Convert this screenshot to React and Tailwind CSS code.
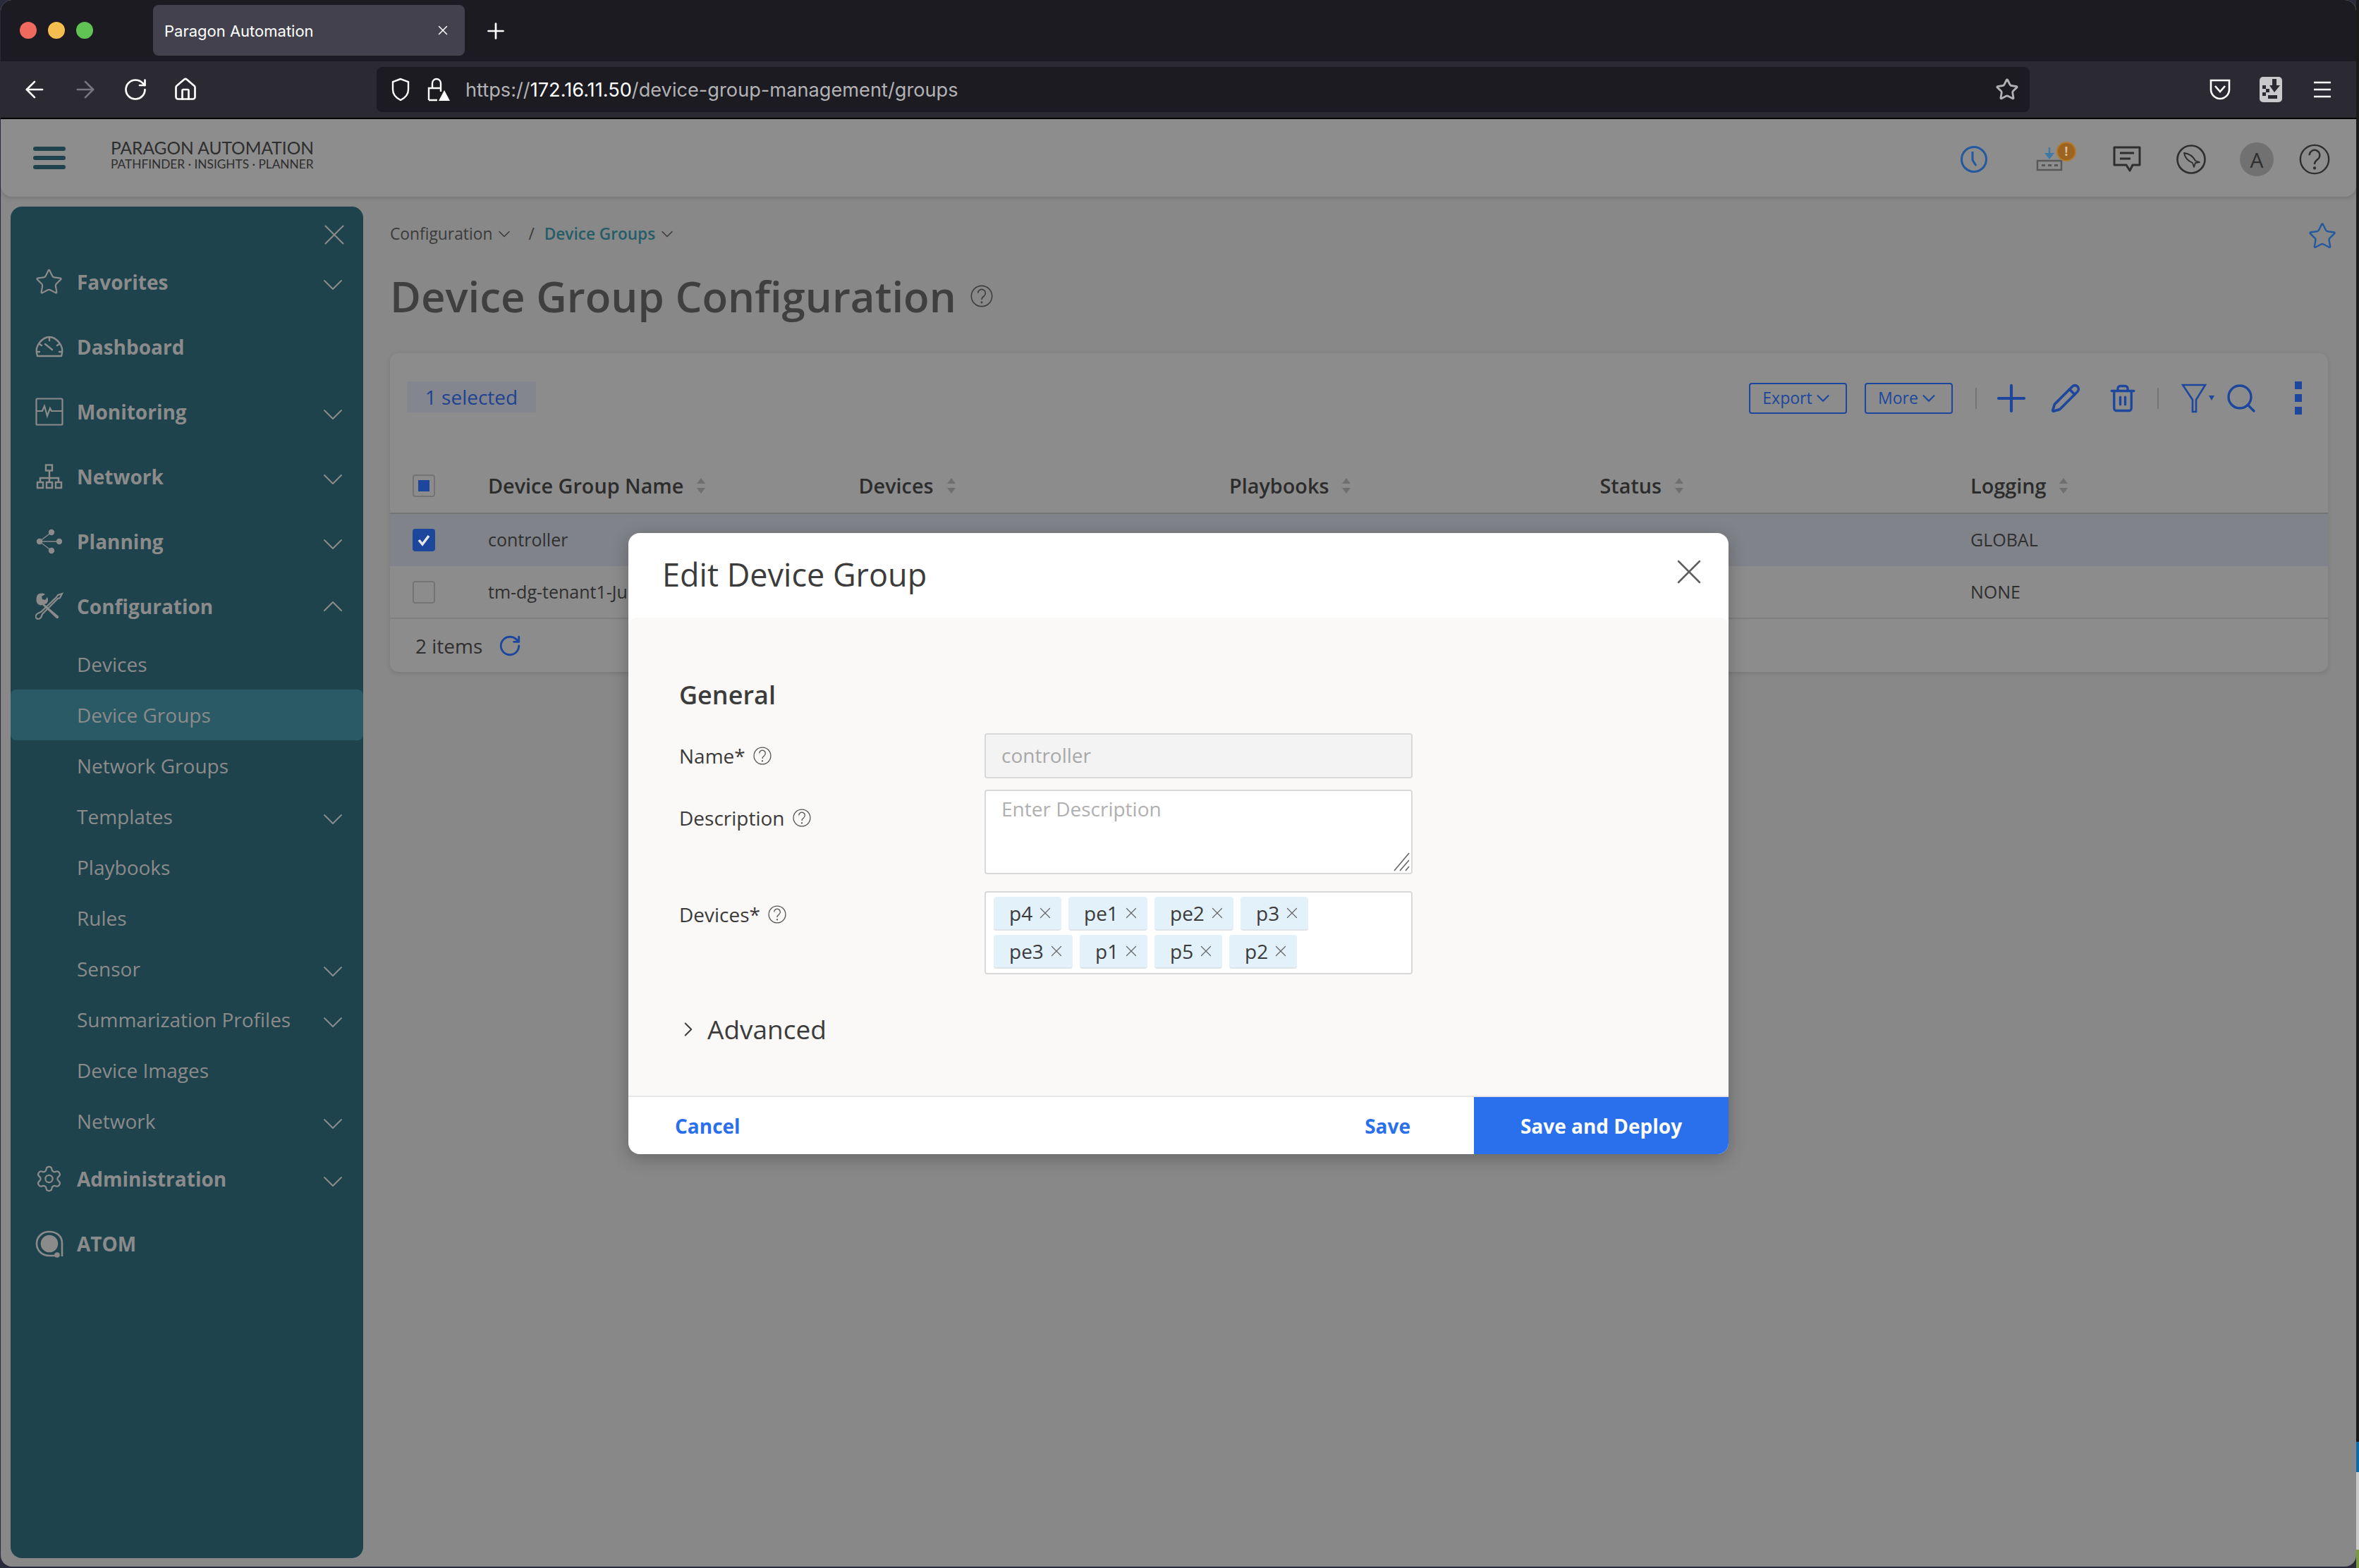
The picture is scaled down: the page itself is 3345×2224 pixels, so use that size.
import {
  ArrowLeft,
  ArrowRight,
  ChevronDown,
  ChevronRight,
  ChevronUp,
  Home,
  Pencil,
  Plus,
  RotateCw,
  Search,
  Settings,
  Star,
  Trash2,
  X,
} from "lucide-react";

const sans = "font-['Open_Sans',sans-serif]";

const HelpIcon = ({ size, stroke, className }) => (
  <svg className={className} width={size} height={size} viewBox="0 0 24 24" fill="none" stroke="currentColor" strokeWidth={stroke}>
    <circle cx="12" cy="12" r="11" />
    <path d="M8 8.8a4 4 0 1 1 6.4 3.2c-1.5 1.1-2.4 1.9-2.4 3.8" />
    <circle cx="12" cy="18.8" r="0.5" />
  </svg>
);

const GaugeIcon = () => (
  <svg width="40" height="32" viewBox="0 0 40 32" fill="none" stroke="currentColor" strokeWidth="2.4">
    <path d="M3 29c-3-10 0-15 3-19C10 5 15 2 20 2s10 3 14 8c3 4 6 9 3 19 z" strokeLinejoin="round" />
    <path d="M20 3v4M6 12l3 2M34 12l-3 2M2 23h4M38 23h-4M14 12l10 8" strokeLinecap="round" />
  </svg>
);

const MonitorIcon = () => (
  <svg width="40" height="40" viewBox="0 0 40 40" fill="none" stroke="currentColor" strokeWidth="2.2">
    <rect x="1.5" y="1.5" width="37" height="37" rx="1.5" />
    <path d="M1.5 19H10l3-7 4 14 4-11 2 4h15.5" />
  </svg>
);

const NetworkIcon = () => (
  <svg width="38" height="36" viewBox="0 0 38 36" fill="none" stroke="currentColor" strokeWidth="2.4">
    <rect x="14" y="1.5" width="9" height="8" />
    <rect x="2" y="26" width="8" height="8" />
    <rect x="15" y="26" width="8" height="8" />
    <rect x="28" y="26" width="8" height="8" />
    <path d="M19 10v15M6 25v-5h26v5" />
  </svg>
);

const PlanningIcon = () => (
  <svg width="38" height="36" viewBox="0 0 38 36" fill="currentColor" stroke="currentColor" strokeWidth="1.4">
    <circle cx="5" cy="18" r="3.5" />
    <circle cx="22" cy="5" r="3.5" />
    <circle cx="33" cy="18" r="3.5" />
    <circle cx="22" cy="31" r="3.5" />
    <path d="M5 18 22 5M5 18h28M5 18l17 13" fill="none" />
  </svg>
);

const ToolsIcon = () => (
  <svg width="40" height="40" viewBox="0 0 40 40" fill="currentColor">
    <path d="M3 4c3-3 8-3 11-1l-5 3 1 4 4 1 3-4c2 3 1 7-1 9l-3 1 20 17c1 2-1 4-3 3L10 18c-3 1-5 0-7-2-2-3-2-8 0-12z" />
    <path d="m38 2-3 6-3 1-22 22c-1 4-3 7-6 7-3 0-4-3-3-5 1-3 4-4 7-5L30 7l2-3z" fill="none" stroke="currentColor" strokeWidth="2.2" />
  </svg>
);

const AtomIcon = () => (
  <svg width="40" height="40" viewBox="0 0 40 40" fill="none" stroke="currentColor" strokeWidth="2.6">
    <path d="M38 38V19C38 9 30 3 20 3S2 10 2 20s8 17 18 17h10" />
    <circle cx="20" cy="20" r="11" fill="currentColor" />
    <circle cx="31" cy="36" r="2.5" fill="currentColor" />
  </svg>
);

const NavRow = ({ icon, label, open }) => (
  <div className="flex h-[92px] items-center pl-[34px] pr-[19px]">
    <span className="flex w-[41px] justify-center text-[#8b8b8b]">{icon}</span>
    <span className="ml-[19px] flex-1 text-[28px] font-bold text-[#8b8b8b]">{label}</span>
    {open === true && <ChevronUp className="text-[#8b8b8b]" size={48} strokeWidth={1} />}
    {open === false && <ChevronDown className="mt-[8px] text-[#8b8b8b]" size={48} strokeWidth={1} />}
  </div>
);

const SubRow = ({ label, active, more }) => (
  <div
    className={`flex h-[72px] items-center pl-[94px] pr-[19px] ${active ? "rounded-lg bg-[#2a5a66]" : ""}`}
  >
    <span className="flex-1 text-[28px] text-[#8b8b8b]">{label}</span>
    {more && <ChevronDown className="mt-[8px] text-[#8b8b8b]" size={48} strokeWidth={1} />}
  </div>
);

const Sidebar = () => (
  <aside className="ml-[14px] mt-[14px] h-[1917px] w-[500px] shrink-0 rounded-2xl bg-[#1e434d]">
    <div className="flex h-[61px] items-start justify-end pr-[16px] pt-[15px]">
      <X className="text-[#8b8b8b]" size={50} strokeWidth={1} />
    </div>
    <NavRow icon={<Star size={50} strokeWidth={1.3} />} label="Favorites" open={false} />
    <NavRow icon={<GaugeIcon />} label="Dashboard" />
    <NavRow icon={<MonitorIcon />} label="Monitoring" open={false} />
    <NavRow icon={<NetworkIcon />} label="Network" open={false} />
    <NavRow icon={<PlanningIcon />} label="Planning" open={false} />
    <NavRow icon={<ToolsIcon />} label="Configuration" open={true} />
    <SubRow label="Devices" />
    <SubRow label="Device Groups" active />
    <SubRow label="Network Groups" />
    <SubRow label="Templates" more />
    <SubRow label="Playbooks" />
    <SubRow label="Rules" />
    <SubRow label="Sensor" more />
    <SubRow label="Summarization Profiles" more />
    <SubRow label="Device Images" />
    <SubRow label="Network" more />
    <NavRow icon={<Settings size={48} strokeWidth={1.3} />} label="Administration" open={false} />
    <NavRow icon={<AtomIcon />} label="ATOM" />
  </aside>
);

const SortCaret = () => (
  <svg width="14" height="22" viewBox="0 0 14 22" fill="#6f6f6f" className="ml-[18px]">
    <path d="M7 0l6 8H1zM7 22l6-8H1z" />
  </svg>
);

const HeadCell = ({ label }) => (
  <div className="flex w-[525.5px] shrink-0 items-center text-[28.8px] font-semibold text-[#2c2c2c]">
    {label}
    <SortCaret />
  </div>
);

const BodyCell = ({ children }) => (
  <div className="w-[525.5px] shrink-0 text-[25px] text-[#2f2f2f]">{children}</div>
);

const Checkbox = ({ state }) => {
  if (state === "checked") {
    return (
      <span className="flex h-[32px] w-[32px] items-center justify-center rounded bg-[#1c479d]">
        <svg width="22" height="22" viewBox="0 0 22 22" fill="none" stroke="#e8e8e8" strokeWidth="3.5">
          <path d="m4 11 5 6 9-12" />
        </svg>
      </span>
    );
  }
  return (
    <span className="flex h-[32px] w-[32px] items-center justify-center rounded border-2 border-[#747474]">
      {state === "mixed" && <span className="h-[16px] w-[16px] bg-[#1c479d]" />}
    </span>
  );
};

const OutlineButton = ({ label, width }) => (
  <button
    className={`flex h-[44px] items-center justify-center rounded border-2 border-[#1c479d] text-[23px] text-[#1c479d] ${width}`}
  >
    {label}
    <ChevronDown size={30} strokeWidth={1.7} />
  </button>
);

const ToolbarGap = () => <span className="h-[30px] w-[2px] bg-[#757575]" />;

const DeviceTable = () => (
  <div className="mt-[39px] h-[452px] w-[2748px] overflow-hidden rounded-xl bg-[#8c8c8c] shadow-[0_2px_6px_rgba(0,0,0,0.12)]">
    <div className="flex items-start justify-between pl-[24px] pt-[40px]">
      <div className="flex h-[44px] w-[183px] items-center justify-center bg-[#83868e] text-[28px] text-[#21428f]">
        1 selected
      </div>
      <div className="flex h-[47px] items-center text-[#1c479d]">
        <OutlineButton label="Export" width="w-[139px]" />
        <span className="w-[25px]" />
        <OutlineButton label="More" width="w-[125px]" />
        <span className="w-[32px]" />
        <ToolbarGap />
        <Plus className="ml-[18px]" size={62} strokeWidth={1.6} />
        <Pencil className="ml-[24px]" size={44} strokeWidth={2} />
        <Trash2 className="ml-[38px]" size={42} strokeWidth={1.9} />
        <span className="w-[28px]" />
        <ToolbarGap />
        <svg className="ml-[32px]" width="48" height="44" viewBox="0 0 48 44" fill="none" stroke="currentColor" strokeWidth="2.6">
          <path d="M2 3h32L21 24v17h-5V24z" />
          <path d="M39 18h8l-4 7z" fill="currentColor" stroke="none" />
        </svg>
        <Search className="ml-[13px]" size={48} strokeWidth={1.7} />
        <svg className="ml-[51px] mr-[36px]" width="12" height="52" viewBox="0 0 12 52" fill="currentColor">
          <rect x="1" y="2" width="10" height="11" />
          <rect x="1" y="20" width="10" height="11" />
          <rect x="1" y="38" width="10" height="11" />
        </svg>
      </div>
    </div>
    <div className="mt-[65px] flex h-[76px] items-center border-b-2 border-[#757575] pb-[2px]">
      <div className="flex w-[139px] shrink-0 pl-[32px]">
        <Checkbox state="mixed" />
      </div>
      <HeadCell label="Device Group Name" />
      <HeadCell label="Devices" />
      <HeadCell label="Playbooks" />
      <HeadCell label="Status" />
      <HeadCell label="Logging" />
    </div>
    <div className="flex h-[74px] items-center bg-[#81838a]">
      <div className="flex w-[139px] shrink-0 pl-[32px]">
        <Checkbox state="checked" />
      </div>
      <BodyCell>controller</BodyCell>
      <BodyCell />
      <BodyCell />
      <BodyCell />
      <BodyCell>GLOBAL</BodyCell>
    </div>
    <div className="flex h-[75px] items-center border-b-2 border-[#7f7f7f]">
      <div className="flex w-[139px] shrink-0 pl-[32px]">
        <Checkbox />
      </div>
      <BodyCell>tm-dg-tenant1-Junos</BodyCell>
      <BodyCell />
      <BodyCell />
      <BodyCell />
      <BodyCell>NONE</BodyCell>
    </div>
    <div className="flex h-[76px] items-center pl-[36px] text-[28px] text-[#2f2f2f]">
      2 items
      <RotateCw className="ml-[22px] text-[#1c479d]" size={34} strokeWidth={2} />
    </div>
  </div>
);

const Tag = ({ label, width }) => (
  <span
    className={`flex h-[48px] items-center justify-between rounded border-b-2 border-[#dde3e7] bg-[#e2f1fa] pl-[22px] pr-[10px] text-[28px] text-[#3a3a3a] ${width}`}
  >
    {label}
    <X className="text-[#666666]" size={26} strokeWidth={1.1} />
  </span>
);

const Field = ({ label, height, top, children }) => (
  <div className={`flex ${height}`}>
    <div className={`flex w-[433px] items-center self-start text-[28px] text-[#3a3a3a] ${top}`}>
      {label}
      <HelpIcon className="ml-[11px] text-[#555555]" size={26} stroke={1.2} />
    </div>
    {children}
  </div>
);

const EditModal = () => (
  <div className={`absolute left-[891px] top-[756px] flex h-[881px] w-[1560px] flex-col overflow-hidden rounded-2xl bg-white shadow-[0_6px_24px_rgba(0,0,0,0.25)] ${sans}`}>
    <div className="flex h-[120px] shrink-0 items-center justify-between pl-[48px] pr-[26px]">
      <h2 className="mb-[2px] text-[45px] font-medium text-[#3c3c3c]">Edit Device Group</h2>
      <X className="mb-[10px] text-[#5f5f5f]" size={60} strokeWidth={1} />
    </div>
    <div className="h-[680px] shrink-0 rounded-t-xl border-b-2 border-[#e6e6e6] bg-[#faf9f7] pl-[72px] pt-[85px]">
      <div className="flex h-[50px] items-center text-[36px] font-semibold text-[#3c3c3c]">General</div>
      <div className="mt-[29px] flex flex-col">
        <Field label="Name*" height="h-[64px]" top="h-[64px]">
          <div className="flex h-[64px] w-[607px] items-center rounded border-2 border-[#d9d9d9] bg-[#f3f3f3] pb-[2px] pl-[22px] text-[28px] text-[#a8a8a8]">
            controller
          </div>
        </Field>
        <Field label="Description" height="mt-[16px] h-[120px]" top="h-[44px] mt-[18px]">
          <div className="relative h-[120px] w-[607px] rounded border-2 border-[#d9d9d9] bg-white pl-[22px] pt-[4px] text-[28px] text-[#b0b0b0]">
            Enter Description
            <svg className="absolute bottom-[2px] right-[2px]" width="24" height="28" viewBox="0 0 24 28" stroke="#666666" strokeWidth="1.6">
              <path d="M2 27 23 2M10 27 23 12M18 27l5-6" />
            </svg>
          </div>
        </Field>
        <Field label="Devices*" height="mt-[24px] h-[118px]" top="h-[44px] mt-[11px]">
          <div className="h-[118px] w-[607px] rounded border-2 border-[#d9d9d9] bg-white pl-[11px] pt-[6px]">
            <div className="flex gap-[10px]">
              <Tag label="p4" width="w-[96px]" />
              <Tag label="pe1" width="w-[112px]" />
              <Tag label="pe2" width="w-[112px]" />
              <Tag label="p3" width="w-[96px]" />
            </div>
            <div className="mt-[6px] flex gap-[10px]">
              <Tag label="pe3" width="w-[112px]" />
              <Tag label="p1" width="w-[96px]" />
              <Tag label="p5" width="w-[96px]" />
              <Tag label="p2" width="w-[96px]" />
            </div>
          </div>
        </Field>
      </div>
      <div className="mt-[50px] flex h-[56px] items-center text-[#3c3c3c]">
        <ChevronRight className="-ml-[4px]" size={34} strokeWidth={1.4} />
        <span className="ml-[10px] text-[37px] font-medium">Advanced</span>
      </div>
    </div>
    <div className="flex flex-1 items-stretch text-[28px] font-bold text-[#2a6fec]">
      <button className="ml-[66px] mr-auto">Cancel</button>
      <button className="mr-[90px]">Save</button>
      <button className="w-[361px] bg-[#2a6fec] text-white">Save and Deploy</button>
    </div>
  </div>
);

const BrowserChrome = () => (
  <div className="font-['Inter',sans-serif] text-white">
    <div className="flex h-[87px] items-start rounded-t-2xl bg-[#1c1b22] pl-[27px]">
      <div className="mt-[31px] flex gap-[16px]">
        <span className="h-[24px] w-[24px] rounded-full bg-[#f0695e]" />
        <span className="h-[24px] w-[24px] rounded-full bg-[#f4bd4f]" />
        <span className="h-[24px] w-[24px] rounded-full bg-[#61c354]" />
      </div>
      <div className="ml-[85px] mt-[7px] flex h-[72px] w-[442px] items-center justify-between rounded-lg bg-[#42414d] pl-[16px] pr-[20px] text-[22px]">
        <span className="mt-[3px]">Paragon Automation</span>
        <X size={22} strokeWidth={1.6} />
      </div>
      <Plus className="ml-[26px] mt-[26px]" size={36} strokeWidth={1.8} />
    </div>
    <div className="flex h-[80px] items-center bg-[#2b2a33] pl-[29px]">
      <ArrowLeft size={38} strokeWidth={1.7} />
      <ArrowRight className="ml-[34px] text-[#77767d]" size={38} strokeWidth={1.7} />
      <RotateCw className="ml-[34px]" size={36} strokeWidth={1.8} />
      <Home className="ml-[35px]" size={36} strokeWidth={1.8} />
      <div className="ml-[253px] flex h-[64px] w-[2344px] items-center rounded-lg bg-[#1c1b22] pl-[20px] pr-[15px] text-[27.2px] text-[#b2b2b5]">
        <svg width="28" height="34" viewBox="0 0 28 34" fill="none" stroke="white" strokeWidth="2.4">
          <path d="M14 2 3 6v11c0 7 5 12 11 15 6-3 11-8 11-15V6z" />
        </svg>
        <svg className="ml-[24px]" width="32" height="34" viewBox="0 0 32 34" fill="none" stroke="white" strokeWidth="2.4">
          <path d="M7 15V8a6 6 0 0 1 12 0v7M2 32V15h17v5M2 32h12" />
          <path d="m24 18 8 15H16z" fill="white" stroke="none" />
        </svg>
        <span className="ml-[22px] mt-[2px] flex-1">
          https://<span className="text-white">172.16.11.50</span>/device-group-management/groups
        </span>
        <Star size={34} strokeWidth={2} />
      </div>
      <svg className="ml-[255px]" width="30" height="32" viewBox="0 0 30 32" fill="none" stroke="white" strokeWidth="2.6">
        <path d="M2 3h26v13c0 7-6 13-13 13S2 23 2 16zM8 11l7 8 7-8" />
      </svg>
      <svg className="ml-[41px]" width="32" height="36" viewBox="0 0 32 36">
        <rect width="32" height="36" rx="5" fill="#c9c9cb" />
        <path d="M4 12h5v5H4zM9 17h5v5H9zM4 22h5v5H4zM12 26h13v5H12zM18 3h6v9h5l-8 10-7-10h4z" fill="#2b2a33" />
      </svg>
      <svg className="ml-[44px]" width="26" height="26" viewBox="0 0 26 26" stroke="white" strokeWidth="2.6">
        <path d="M1 3h24M1 13h24M1 23h24" />
      </svg>
    </div>
    <div className="h-[2px] bg-black" />
  </div>
);

const AppHeader = () => (
  <header className="relative z-10 flex h-[110px] items-center rounded-b-2xl bg-[#8d8d8d] pl-[46px] shadow-[0_2px_6px_rgba(0,0,0,0.15)]">
    <div className="flex flex-col gap-[7px]">
      <span className="h-[6px] w-[46px] rounded-full bg-[#1e434d]" />
      <span className="h-[6px] w-[46px] rounded-full bg-[#1e434d]" />
      <span className="h-[6px] w-[46px] rounded-full bg-[#1e434d]" />
    </div>
    <div className="ml-[64px] mt-[-8px] flex flex-col font-['Lato',sans-serif] text-[#2e2e2e]">
      <span className="text-[24.5px] leading-[26px]">PARAGON AUTOMATION</span>
      <span className="text-[17.3px] leading-[20px]">PATHFINDER · INSIGHTS · PLANNER</span>
    </div>
    <div className="ml-auto flex items-center pr-[37px] pt-[4px]">
      <svg width="40" height="40" viewBox="0 0 40 40" fill="none" stroke="#23599f" strokeWidth="3">
        <circle cx="20" cy="20" r="17.5" />
        <path d="M18 9v12l5 8" />
      </svg>
      <span className="relative ml-[66px] h-[50px] w-[40px]">
        <svg className="absolute bottom-[8px] left-[2px]" width="38" height="34" viewBox="0 0 38 34" fill="none">
          <path d="M19 0v10" stroke="#3f7aa6" strokeWidth="2.4" />
          <path d="m12 8 7 9 7-9z" fill="#3f7aa6" />
          <rect x="2" y="19" width="34" height="13" stroke="#585858" strokeWidth="2.4" />
          <path d="M8 25.5h5M17 25.5h5M26 25.5h5" stroke="#585858" strokeWidth="3" />
        </svg>
        <span className="absolute -right-[19px] top-0 flex h-[28px] w-[28px] items-center justify-center rounded-full border-2 border-[#b27a2d] bg-[#9c6420] text-[17px] font-bold text-[#d9c4a4]">
          !
        </span>
      </span>
      <svg className="ml-[71px]" width="40" height="38" viewBox="0 0 40 38" fill="none" stroke="#2e2e2e" strokeWidth="3">
        <path d="M2 2h36v25H28l-4 8-5-8H2z" strokeLinejoin="round" />
        <path d="M10 10h20M10 18h15" />
      </svg>
      <span className="ml-[50px] flex h-[42px] w-[42px] items-center justify-center rounded-full">
        <svg width="42" height="42" viewBox="0 0 42 42" fill="none" stroke="#2e2e2e">
          <circle cx="21" cy="21" r="19.5" strokeWidth="2.6" />
          <path d="M11 12c8 1 13 5 16 11l6 2-6 1-2 6-2-6c-7-3-11-8-12-14z" strokeWidth="1.8" strokeLinejoin="round" />
        </svg>
      </span>
      <span className={`ml-[48px] flex h-[48px] w-[48px] items-center justify-center rounded-full bg-[#717171] text-[30px] text-[#2e2e2e] ${sans}`}>
        A
      </span>
      <HelpIcon className="ml-[36px] text-[#2e2e2e]" size={44} stroke={1.3} />
    </div>
  </header>
);

// the bit of desktop that shows to the right of the browser window
const DesktopStrip = () => (
  <div className="absolute right-0 top-0 flex h-full w-[4px] flex-col">
    <div className="h-[2045px] bg-[#1a1a1a]" />
    <div className="h-[43px] bg-[#0b6aa8]" />
    <div className="flex-1 bg-[#c9c9c9]" />
    <div className="h-[26px] bg-[#7d9a3e]" />
  </div>
);

const App = () => (
  <div className="relative h-[2224px] w-[3345px] overflow-hidden bg-[#2a2b3a]">
    <DesktopStrip />
    <div className="relative ml-[1px] h-[2222px] w-[3340px] overflow-hidden rounded-2xl bg-[#888888]">
      <BrowserChrome />
      <AppHeader />
      <div className={`flex ${sans}`}>
        <Sidebar />
        <main className="pl-[38px]">
          <div className="mt-[33px] flex h-[40px] w-[2761px] items-center justify-between">
            <div className="flex items-center text-[22.8px] text-[#3b3b3b]">
              Configuration
              <ChevronDown className="ml-[3px]" size={28} strokeWidth={1.3} />
              <span className="ml-[20px]">/</span>
              <span className="ml-[14px] text-[22.6px] font-semibold text-[#245d68]">Device Groups</span>
              <ChevronDown className="ml-[3px]" size={28} strokeWidth={1.3} />
            </div>
            <Star className="mt-[6px] text-[#23599f]" size={42} strokeWidth={1.4} />
          </div>
          <div className="mt-[28px] flex h-[80px] items-center text-[#3f3f3f]">
            <h1 className="text-[60px] font-semibold">Device Group Configuration</h1>
            <HelpIcon className="ml-[20px] text-[#3f3f3f]" size={32} stroke={1.2} />
          </div>
          <div className="pt-[2px]">
            <DeviceTable />
          </div>
        </main>
      </div>
    </div>
    <EditModal />
  </div>
);

export default App;
